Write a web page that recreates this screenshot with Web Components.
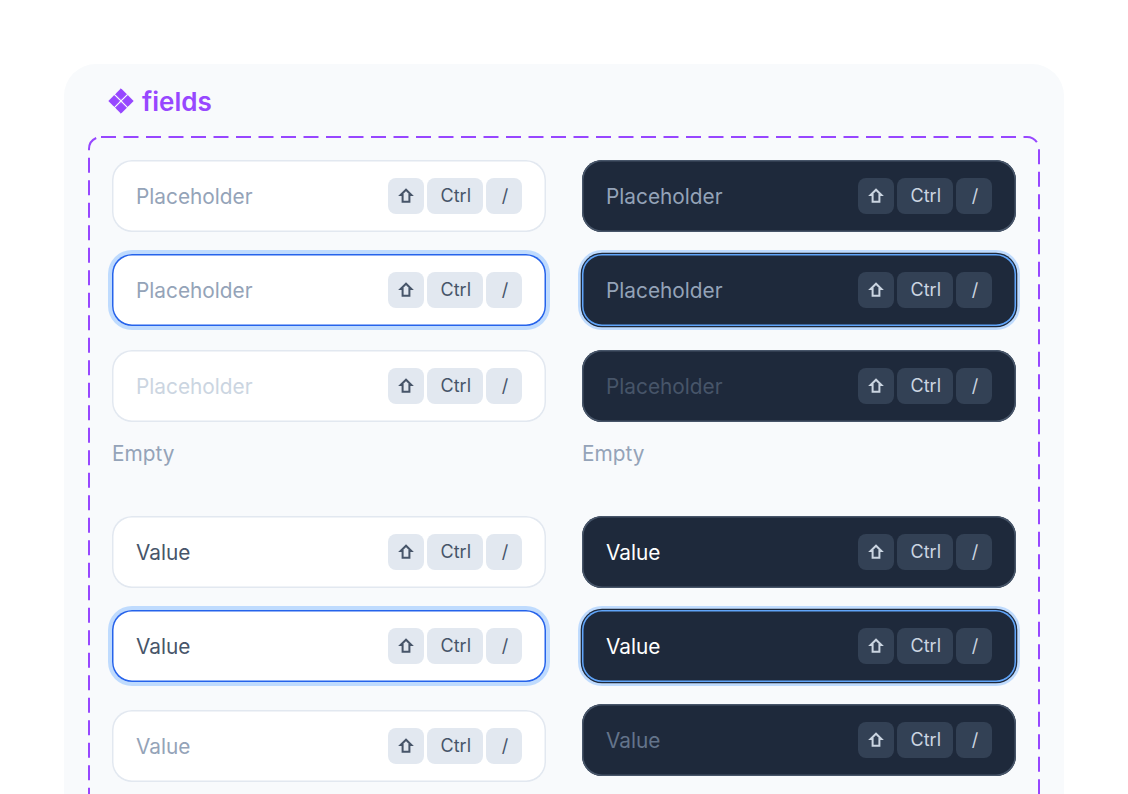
<!DOCTYPE html>
<html lang="en"><head><meta charset="utf-8"><title>fields</title>
<style>
html,body{margin:0;height:794px;overflow:hidden;background:#fff;font-family:Inter,"Liberation Sans",sans-serif}
</style></head><body>
<x-card>
  <x-title slot="title">fields</x-title>
  <x-frame>
    <x-column>
      <x-field state="default" ph>Placeholder</x-field>
      <x-field state="focus" ph style="--mt:22px">Placeholder</x-field>
      <x-field state="disabled" ph style="--mt:24px">Placeholder</x-field>
      <x-note>Empty</x-note>
      <x-field state="default" style="--mt:50.500px">Value</x-field>
      <x-field state="focus" style="--mt:22px">Value</x-field>
      <x-field state="disabled" style="--mt:28px">Value</x-field>
    </x-column>
    <x-column dark>
      <x-field dark state="default" ph>Placeholder</x-field>
      <x-field dark state="focus" ph style="--mt:22px">Placeholder</x-field>
      <x-field dark state="disabled" ph style="--mt:24px">Placeholder</x-field>
      <x-note>Empty</x-note>
      <x-field dark state="default" style="--mt:50.500px">Value</x-field>
      <x-field dark state="focus" style="--mt:22px">Value</x-field>
      <x-field dark state="disabled" style="--mt:22px">Value</x-field>
    </x-column>
  </x-frame>
</x-card>
<script>
function def(name, css, html){
  customElements.define(name, class extends HTMLElement{
    constructor(){super();this.attachShadow({mode:'open'}).innerHTML='<style>'+css+'</style>'+html;}
  });
}
def('x-card',
  ':host{display:block;width:1000px;margin:64px 0 0 64px;box-sizing:border-box;padding:24px 24px 24px;background:#f8fafc;border-radius:32px}',
  '<slot name="title"></slot><slot></slot>');
def('x-title',
  ':host{display:flex;align-items:center;gap:8px;height:26px;margin:0 0 22px 20px;color:#9747ff;font:600 26px/26px Inter,sans-serif}svg{display:block;flex:none}.t{display:block;margin-top:1px}',
  '<svg width="26" height="26" viewBox="0 0 26 26" fill="#9747ff" aria-hidden="true"><path d="M13 .8l5.400 5.400-5.400 5.400-5.400-5.400Z" stroke="#9747ff" stroke-linejoin="round"/><path d="M13 14.400l5.400 5.400-5.400 5.400-5.400-5.400Z" stroke="#9747ff" stroke-linejoin="round"/><path d="M6.200 7.600 11.600 13l-5.400 5.400L.8 13Z" stroke="#9747ff" stroke-linejoin="round"/><path d="M19.800 7.600 25.200 13l-5.400 5.400L14.400 13Z" stroke="#9747ff" stroke-linejoin="round"/></svg><span class="t"><slot></slot></span>');
def('x-frame',
  ':host{display:grid;grid-template-columns:434px 434px;column-gap:36px;position:relative;padding:24px}svg{position:absolute;inset:0;width:100%;height:100%;overflow:visible;pointer-events:none}rect{x:1px;y:1px;width:calc(100% - 2px);height:calc(100% - 2px);fill:none;stroke:#9747ff;stroke-width:2;stroke-dasharray:15 7.500}',
  '<svg aria-hidden="true"><rect rx="12" ry="12"></rect></svg><slot></slot>');
def('x-column',':host{display:block}','<slot></slot>');
def('x-note',':host{display:block;margin-top:19.500px;color:#94a3b8;font:400 20.800px/24px Inter,sans-serif}','<slot></slot>');
def('x-key',
  ':host{display:flex;align-items:center;justify-content:center;box-sizing:border-box;min-width:36px;height:36px;padding:0 12px 0 14px;border-radius:8px;background:var(--key-bg);color:var(--key-fg);font:400 18px/20px Inter,sans-serif}',
  '<slot></slot>');
def('x-shift',
  ':host{display:block;width:20px;height:20px;margin:0 -13px 0 -15px}svg{display:block}',
  '<svg width="20" height="20" viewBox="0 0 20 20" fill="none" stroke="currentColor" stroke-width="2" stroke-linejoin="miter" aria-hidden="true"><path d="M10 3.700 4.600 9H6.600V15.700H13.400V9H15.400Z"/></svg>');
const themes={
 light:{default:['#fff','#e2e8f0','#94a3b8','#475569'],focus:['#fff','#2563eb','#94a3b8','#475569'],disabled:['#fff','#e2e8f0','#cbd5e1','#94a3b8']},
 dark:{default:['#1e293b','#475569','#94a3b8','#fff'],focus:['#1e293b','#60a5fa','#94a3b8','#fff'],disabled:['#1e293b','#475569','#475569','#64748b']}
};
customElements.define('x-field', class extends HTMLElement{
  constructor(){
    super();
    this.attachShadow({mode:'open'}).innerHTML=`<style>
      :host{display:flex;align-items:center;justify-content:space-between;box-sizing:border-box;height:72px;margin-top:var(--mt,0);padding:0 24px;border-radius:20px;background:var(--bg);box-shadow:inset 0 0 0 1.500px var(--bd);color:var(--fg);font:400 20.800px/26px Inter,sans-serif;--key-bg:#e2e8f0;--key-fg:#475569}
      :host([dark]){--key-bg:#334155;--key-fg:#cbd5e1}
      :host([state=focus]){box-shadow:inset 0 0 0 1.500px var(--bd),0 0 0 4px #bfdbfe}
      :host([dark][state=focus]){box-shadow:inset 0 0 0 1.500px var(--bd),0 0 0 1.300px #1e293b,0 0 0 4px #bfdbfe}
      .label{display:block;margin-top:2px}
      .keys{display:flex;gap:3px}
    </style><span class="label"><slot></slot></span><div class="keys"><x-key><x-shift></x-shift></x-key><x-key>Ctrl</x-key><x-key>/</x-key></div>`;
  }
  connectedCallback(){
    const t=themes[this.hasAttribute('dark')?'dark':'light'][this.getAttribute('state')];
    this.style.setProperty('--bg',t[0]);this.style.setProperty('--bd',t[1]);
    this.style.setProperty('--fg',this.hasAttribute('ph')?t[2]:t[3]);
  }
});
</script>
</body></html>
